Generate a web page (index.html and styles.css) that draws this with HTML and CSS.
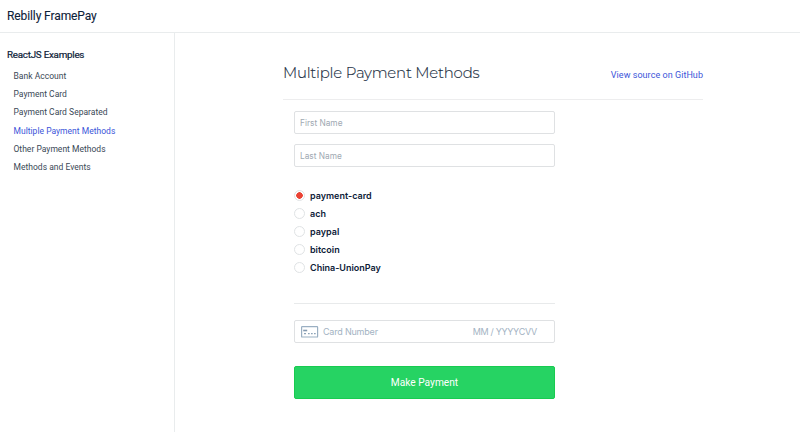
FILE: index.html
```html
<!DOCTYPE html>
<html lang="en">
<head>
<meta charset="utf-8">
<title>Rebilly FramePay</title>
<link rel="stylesheet" href="styles.css">
</head>
<body>
<header class="topbar"><span>Rebilly FramePay</span></header>
<div class="layout">
  <nav class="sidebar">
    <h2 class="sidebar-title"><span>ReactJS Examples</span></h2>
    <ul class="menu">
      <li><a>Bank Account</a></li>
      <li><a>Payment Card</a></li>
      <li><a>Payment Card Separated</a></li>
      <li><a class="active">Multiple Payment Methods</a></li>
      <li><a>Other Payment Methods</a></li>
      <li><a>Methods and Events</a></li>
    </ul>
  </nav>
  <main class="content">
    <div class="heading">
      <h1>Multiple Payment Methods</h1>
      <a class="source">View source on GitHub</a>
    </div>
    <form class="form">
      <input class="field" type="text" placeholder="First Name">
      <input class="field" type="text" placeholder="Last Name">
      <div class="methods">
        <label class="method"><i class="radio checked"></i><span>payment-card</span></label>
        <label class="method"><i class="radio"></i><span>ach</span></label>
        <label class="method"><i class="radio"></i><span>paypal</span></label>
        <label class="method"><i class="radio"></i><span>bitcoin</span></label>
        <label class="method"><i class="radio"></i><span>China-UnionPay</span></label>
      </div>
      <div class="card">
        <svg class="card-icon" width="18" height="12" viewBox="0 0 18 12" fill="none">
          <rect x="0.6" y="0.6" width="16" height="10.4" rx="0.6" stroke="#9aafc2" stroke-width="1.2"/>
          <path d="M2.2 4.5h4" stroke="#8299b0" stroke-width="1.6"/>
          <path d="M3 7.6h2M7 7.6h1.7M10 7.6h1.7M13 7.6h1.7" stroke="#8fa5b9" stroke-width="1.2"/>
        </svg>
        <span class="number">Card Number</span>
        <span class="expiry">MM / YYYY</span>
        <span class="cvv">CVV</span>
      </div>
      <button class="submit" type="button">Make Payment</button>
    </form>
  </main>
</div>
</body>
</html>
```
FILE: styles.css
```css
* { box-sizing: border-box; }
body {
  margin: 0;
  height: 432px;
  overflow: hidden;
  background: #fff;
  color: #0d2138;
  font-family: Roboto, sans-serif;
  display: flex;
  flex-direction: column;
}
.topbar {
  height: 33px;
  padding: 0 7px;
  border-bottom: 1px solid #e9eced;
  font-size: 12px;
  line-height: 32px;
  letter-spacing: -0.1px;
  -webkit-text-stroke: 0.1px;
}
.layout { flex: 1; display: flex; }
.sidebar {
  width: 175px;
  padding: 14px 7px;
  border-right: 1px solid #e9eced;
}
.sidebar-title {
  margin: 0 0 4.8px;
  font-size: 9.8px;
  font-weight: 400;
  line-height: 15px;
  letter-spacing: -0.24px;
  -webkit-text-stroke: 0.2px;
}
.menu { margin: 0; padding: 0 0 0 6.5px; list-style: none; }
.menu li {
  height: 18.25px;
  font-size: 8.5px;
  line-height: 18.25px;
  letter-spacing: 0.02px;
  color: #3a4856;
}
.menu .active { color: #3c55d9; }
.content { width: 528px; padding: 0 0 0 108px; }
.heading {
  height: 67px;
  padding-top: 13px;
  display: flex;
  align-items: center;
  justify-content: space-between;
  border-bottom: 1px solid #ededee;
}
h1 {
  margin: 0;
  font: 300 14.9px/20px Montserrat, Inter, sans-serif;
  letter-spacing: -0.19px;
  color: #1d3043;
  -webkit-text-stroke: 0.15px;
}
.source {
  padding-top: 4px;
  font-size: 9px;
  letter-spacing: 0.05px;
  color: #3c55d9;
}
.form {
  width: 261px;
  margin: 11px 0 0 11px;
  display: flex;
  flex-direction: column;
}
.field {
  height: 23px;
  margin: 0 0 10px;
  padding: 0 5px;
  border: 1px solid #dfe1e3;
  border-radius: 2px;
  font: 8.3px Inter, sans-serif;
  outline: none;
}
.field::placeholder { color: #a0a9b2; }
.methods {
  height: 127px;
  padding-top: 9.5px;
  border-bottom: 1px solid #e8eaeb;
}
.method {
  height: 18.1px;
  display: flex;
  align-items: center;
  gap: 5px;
  font: 600 9px Inter, sans-serif;
}
.radio {
  width: 11px;
  height: 11px;
  border: 1px solid #e0e3e5;
  border-radius: 50%;
}
.radio.checked { background: radial-gradient(circle, #ea4335 3px, transparent 3.5px); }
.card {
  height: 23px;
  margin: 16px 0 23px;
  padding: 0 17px 0 6px;
  display: flex;
  align-items: center;
  border: 1px solid #dfe1e3;
  border-radius: 2px;
  font: 9px Inter, sans-serif;
  letter-spacing: -0.2px;
  color: #a3b3c3;
}
.number { flex: 1; margin-left: 4px; }
.expiry, .cvv { letter-spacing: -0.32px; }
.submit {
  height: 33px;
  padding: 0;
  border: 1px solid #18cb50;
  border-radius: 2px;
  background: #26d363;
  color: #fff;
  font: 10.2px Roboto, sans-serif;
}
```
